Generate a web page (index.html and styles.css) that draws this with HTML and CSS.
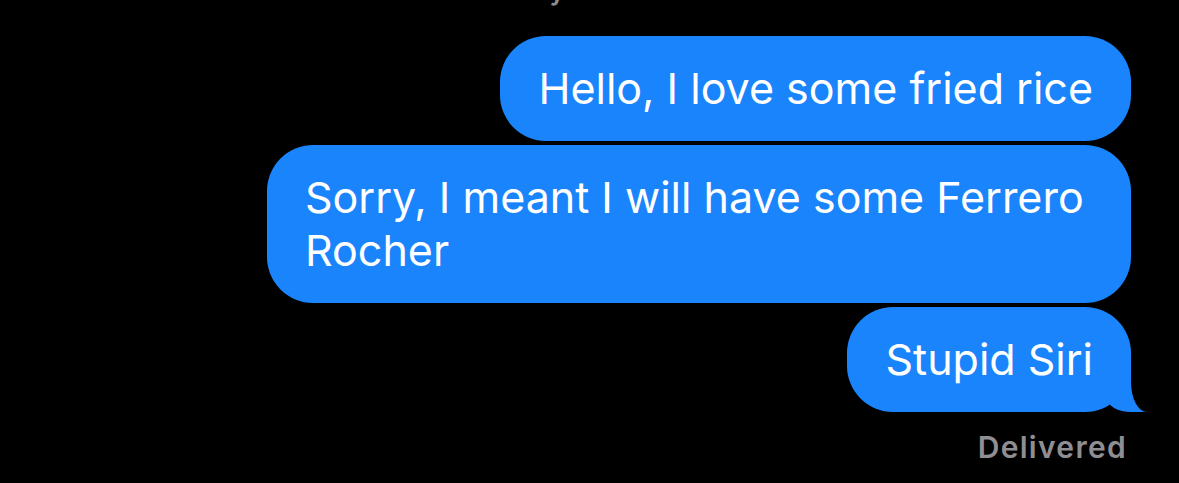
FILE: index.html
```html
<!DOCTYPE html>
<html lang="en">
<head>
    <meta charset="UTF-8">
    <title>Messages</title>
    <meta name="viewport" content="width=device-width, initial-scale=1">
    <link rel="stylesheet" href="styles.css">
</head>
<body>
    <main class="thread">
        <p class="stamp">Today 10:03 AM</p>
        <section class="messages">
            <div class="bubble">Hello, I love some fried rice</div>
            <div class="bubble">Sorry, I meant I will have some Ferrero Rocher</div>
            <div class="bubble tail">Stupid Siri</div>
            <span class="status">Delivered</span>
        </section>
    </main>
</body>
</html>
```

FILE: styles.css
```css
* {
    box-sizing: border-box;
}
html, body {
    margin: 0;
    padding: 0;
    background: #000;
}
body {
    font-family: Inter, "Liberation Sans", sans-serif;
    color: #fff;
    height: 483px;
    overflow: hidden;
}
.thread {
    padding: 0 48px 0 48px;
}
.stamp {
    margin: -24px 0 0;
    height: 30px;
    line-height: 30px;
    font-size: 26px;
    font-weight: 600;
    color: #8e8e93;
    text-align: center;
}
.messages {
    display: flex;
    flex-direction: column;
    align-items: flex-end;
    gap: 4px;
    margin-top: 30px;
}
.bubble {
    position: relative;
    max-width: 864px;
    padding: 26px 38px;
    background: #1a84fc;
    border-radius: 46px;
    font-size: 43px;
    line-height: 53px;
}
.bubble.tail::before {
    content: "";
    position: absolute;
    bottom: 0;
    right: -16px;
    width: 40px;
    height: 50px;
    background: #1a84fc;
    border-bottom-left-radius: 24px 14px;
}
.bubble.tail::after {
    content: "";
    position: absolute;
    bottom: 0;
    right: -40px;
    width: 40px;
    height: 52px;
    background: #000;
    border-bottom-left-radius: 16px 30px;
}
.status {
    margin-top: 14px;
    padding-right: 4px;
    font-size: 30px;
    line-height: 34px;
    font-weight: 600;
    letter-spacing: 1.3px;
    color: #8e8e93;
}
```
